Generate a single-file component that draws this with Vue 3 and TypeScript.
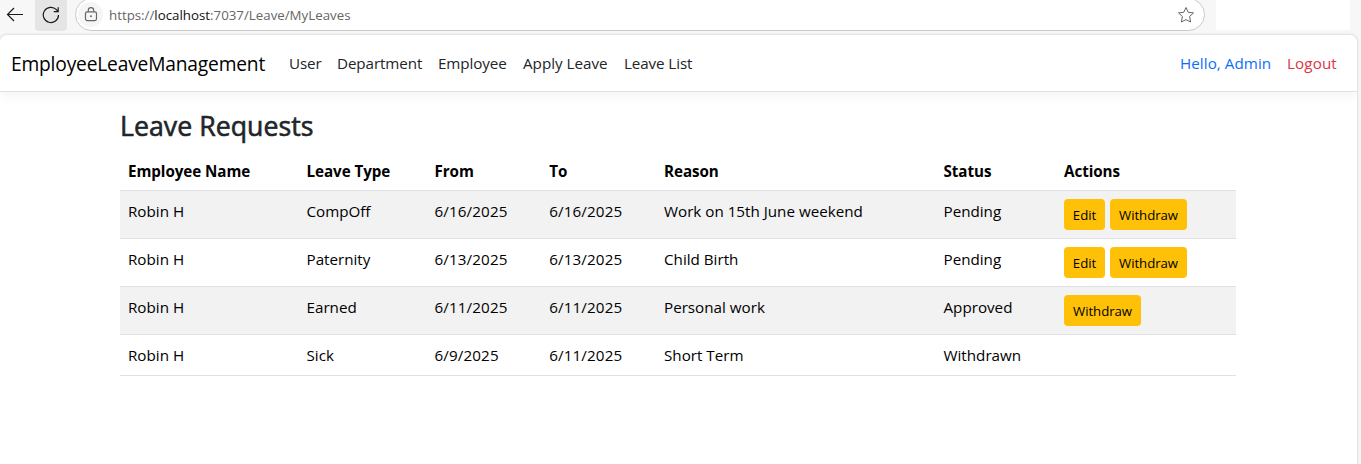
<script setup lang="ts">
interface LeaveRequest {
  employee: string
  type: string
  from: string
  to: string
  reason: string
  status: string
  actions: string[]
}

const links: { label: string; key: string }[] = [
  { label: 'User', key: 'user' },
  { label: 'Department', key: 'department' },
  { label: 'Employee', key: 'employee' },
  { label: 'Apply Leave', key: 'apply' },
  { label: 'Leave List', key: 'list' },
]

const requests: LeaveRequest[] = [
  { employee: 'Robin H', type: 'CompOff', from: '6/16/2025', to: '6/16/2025', reason: 'Work on 15th June weekend', status: 'Pending', actions: ['Edit', 'Withdraw'] },
  { employee: 'Robin H', type: 'Paternity', from: '6/13/2025', to: '6/13/2025', reason: 'Child Birth', status: 'Pending', actions: ['Edit', 'Withdraw'] },
  { employee: 'Robin H', type: 'Earned', from: '6/11/2025', to: '6/11/2025', reason: 'Personal work', status: 'Approved', actions: ['Withdraw'] },
  { employee: 'Robin H', type: 'Sick', from: '6/9/2025', to: '6/11/2025', reason: 'Short Term', status: 'Withdrawn', actions: [] },
]
</script>

<template>
  <div class="browser">
    <div class="toolbar">
      <svg class="back" width="18" height="16" viewBox="0 0 18 16"><path d="M17 7.5H1.5M8 1 1.5 7.5 8 14" /></svg>
      <div class="reload">
        <svg width="18" height="18" viewBox="0 0 18 18"><path d="M16.5 9A7.6 7.6 0 1 1 14.4 3.7L16 5.4M16.2 1.2V5.6H11.7" /></svg>
      </div>
      <div class="address">
        <span class="site">
          <svg width="14" height="15" viewBox="0 0 14 15"><rect x="1.5" y="4.8" width="11" height="8.8" rx="1.8" /><path d="M4.3 4.8V3.3a2.7 2.7 0 0 1 5.4 0v1.5" /><circle cx="7" cy="9.2" r=".9" /></svg>
        </span>
        <span class="url">https://<b>localhost</b>:7037/Leave/MyLeaves</span>
        <svg class="star" width="18" height="18" viewBox="0 0 18 18"><path d="M9 1.5 11.2 6.3 16.5 6.9 12.6 10.5 13.6 16 9 13.6 4.4 16 5.4 10.5 1.5 6.9 6.8 6.3Z" /></svg>
      </div>
      <div class="blank"></div>
    </div>

    <div class="page">
      <nav class="navbar">
        <span class="brand">EmployeeLeaveManagement</span>
        <a v-for="link in links" :key="link.key" class="link" :class="link.key">{{ link.label }}</a>
        <a class="hello">Hello, Admin</a>
        <a class="logout">Logout</a>
      </nav>

      <main>
        <h2>Leave Requests</h2>
        <table>
          <thead>
            <tr>
              <th class="c-employee">Employee Name</th>
              <th class="c-type">Leave Type</th>
              <th class="c-date">From</th>
              <th class="c-date">To</th>
              <th class="c-reason">Reason</th>
              <th class="c-status">Status</th>
              <th>Actions</th>
            </tr>
          </thead>
          <tbody>
            <tr v-for="(r, i) in requests" :key="i">
              <td>{{ r.employee }}</td>
              <td>{{ r.type }}</td>
              <td class="date">{{ r.from }}</td>
              <td class="date">{{ r.to }}</td>
              <td>{{ r.reason }}</td>
              <td>{{ r.status }}</td>
              <td>
                <div v-if="r.actions.length" class="actions">
                  <button v-for="a in r.actions" :key="a" :class="a.toLowerCase()">{{ a }}</button>
                </div>
              </td>
            </tr>
          </tbody>
        </table>
      </main>
    </div>
  </div>
</template>

<style>
body {
  margin: 0;
  overflow: hidden;
}
</style>

<style scoped>
* {
  box-sizing: border-box;
}
.browser {
  width: 1361px;
  height: 464px;
  overflow: hidden;
  background: #f7f7f7;
  font-family: "Segoe UI", "Open Sans", "Noto Sans", sans-serif;
  font-size: 15.2px;
  line-height: 24px;
  color: #212529;
}
svg {
  fill: none;
  stroke: #1b1b1b;
  stroke-width: 1.2;
  display: block;
}
.toolbar {
  display: flex;
  height: 34px;
  align-items: flex-start;
}
.back {
  margin: 7px 11px 0 6px;
}
.reload {
  width: 32px;
  height: 31px;
  padding: 6px 7px;
  background: #e5e5e5;
  border-radius: 0 0 4px 4px;
}
.address {
  display: flex;
  align-items: center;
  width: 1130px;
  height: 33px;
  margin: -2px 0 0 8px;
  padding: 0 9px 0 1px;
  background: #fff;
  border: 1px solid #c9c9c9;
  border-radius: 17px;
}
.site {
  display: flex;
  align-items: center;
  justify-content: center;
  width: 25px;
  height: 25px;
  margin-left: 1px;
  border-radius: 50%;
  background: #f5f5f5;
}
.site svg,
.star {
  stroke: #666;
}
.star {
  stroke-width: 1;
}
.site circle {
  fill: #555;
  stroke: none;
}
.url {
  margin-left: 6px;
  flex: 1;
  font-size: 13.3px;
  letter-spacing: 0;
  color: #666;
}
.url b {
  font-weight: 400;
  color: #111;
}
.blank {
  width: 134px;
  height: 30px;
  margin-left: 11px;
  background: #fff;
}
.page {
  width: 1359px;
  height: 440px;
  margin-left: -1px;
  background: #fff;
  border: 1px solid #e6e6e6;
  border-radius: 8px 8px 0 0;
  box-shadow: 0 0 2px #ddd;
  overflow: hidden;
}
.navbar {
  display: flex;
  align-items: center;
  height: 57px;
  padding-left: 11px;
  border-bottom: 1px solid #dee2e6;
  box-shadow: 0 4px 12px rgba(0, 0, 0, 0.05);
  white-space: nowrap;
}
.brand {
  width: 278px;
  padding-top: 2px;
  font-size: 19.2px;
  letter-spacing: -0.18px;
  color: #000;
}
.link {
  letter-spacing: -0.1px;
}
.user {
  width: 48px;
}
.department {
  width: 101px;
}
.employee {
  width: 85px;
}
.apply {
  width: 101px;
  letter-spacing: 0;
}
.list {
  width: 70px;
}
.hello {
  width: 107px;
  margin-left: 486px;
  letter-spacing: 0.06px;
  color: #0d6efd;
}
.logout {
  letter-spacing: 0.12px;
  color: #dc3545;
}
main {
  width: 1116px;
  margin: 18px 0 0 120px;
}
h2 {
  height: 40px;
  margin: 0;
  font-size: 26.7px;
  font-weight: 500;
  line-height: 32px;
  letter-spacing: 0.03px;
  -webkit-text-stroke: 0.6px #212529;
}
table {
  width: 1116px;
  table-layout: fixed;
  border-collapse: separate;
  border-spacing: 0;
  color: #000;
}
th,
td {
  height: 41px;
  padding: 8px;
  border-bottom: 1px solid #dee2e6;
  text-align: left;
  vertical-align: top;
  white-space: nowrap;
}
th {
  padding: 9px 8px 7px;
  font-weight: 700;
  letter-spacing: -0.06px;
}
.date {
  letter-spacing: 0.12px;
}
.c-employee {
  width: 178.5px;
}
.c-type {
  width: 128px;
}
.c-date {
  width: 114.75px;
}
.c-reason {
  width: 279.5px;
}
.c-status {
  width: 120.5px;
}
tbody tr:nth-child(odd) {
  background: #f2f2f2;
}
.actions {
  display: flex;
  gap: 5px;
}
button {
  height: 31px;
  padding: 1px 0 0;
  border: 0;
  border-radius: 4px;
  background: #ffc107;
  color: #000;
  font: 13.2px/21px "Segoe UI", "Open Sans", "Noto Sans", sans-serif;
  letter-spacing: -0.04px;
}
.edit {
  width: 41px;
}
.withdraw {
  width: 77px;
}
</style>
